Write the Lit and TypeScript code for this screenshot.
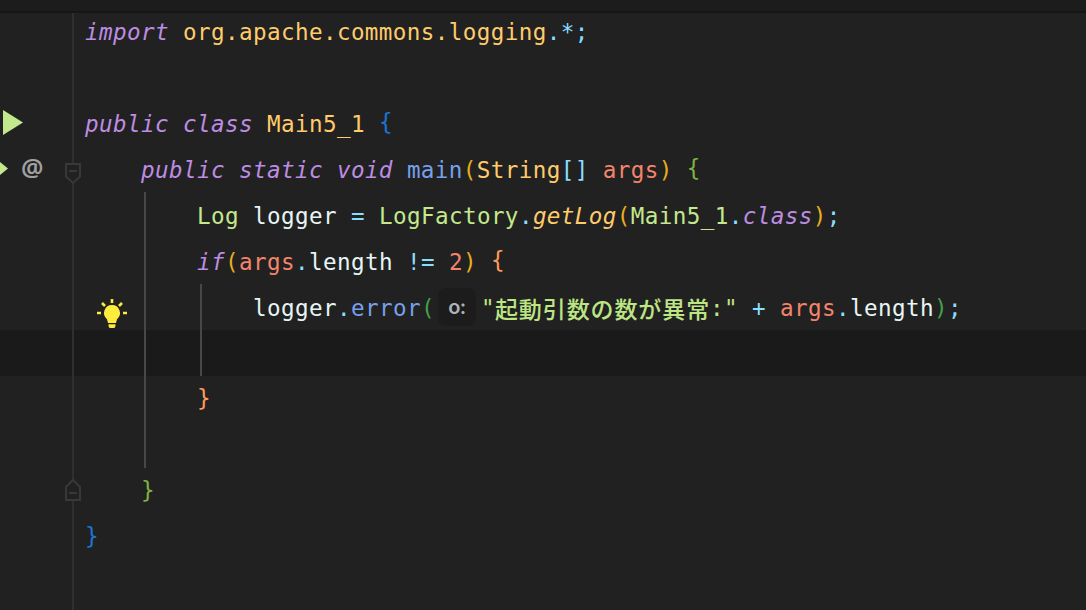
import { LitElement, html, css } from "lit";
import { customElement } from "lit/decorators.js";

type Tok = [string, string];
const B = "blue up", Y = "yel", C = "cy", P = "pur", F = "fn", S = "sal", W = "wh", G = "grn up", L = "lime", O = "org up", Br = "br";

const lines: { indent: number; toks: Tok[]; cur?: boolean; g?: string }[] = [
  { indent: 0, toks: [["import", P], [" ", W], ["org.apache.commons.logging", Y], [".*;", C]] },
  { indent: 0, toks: [] },
  { indent: 0, toks: [["public class", P], [" ", W], ["Main5_1", Y], [" ", W], ["{", B]], g: "run" },
  { indent: 1, toks: [["public static void", P], [" ", W], ["main", F], ["(", Br], ["String", Y], ["[]", C], [" ", W], ["args", S], [")", Br], [" ", W], ["{", G]], g: "method" },
  { indent: 2, toks: [["Log", L], [" logger ", W], ["=", C], [" ", W], ["LogFactory", L], [".", C], ["getLog", "yi"], ["(", Br], ["Main5_1", L], [".", C], ["class", P], [")", Br], [";", C]] },
  { indent: 2, toks: [["if", P], ["(", Br], ["args", S], [".", C], ["length ", W], ["!=", C], [" ", W], ["2", S], [")", Br], [" ", W], ["{", O]] },
  { indent: 3, toks: [], g: "bulb" },
  { indent: 3, toks: [], cur: true },
  { indent: 2, toks: [["}", O]] },
  { indent: 0, toks: [] },
  { indent: 1, toks: [["}", G]], g: "foldEnd" },
  { indent: 0, toks: [["}", B]] },
  { indent: 0, toks: [] },
];

@customElement("app-root")
export class AppRoot extends LitElement {
  static styles = css`
    :host { display: block; width: 1086px; height: 610px; overflow: hidden; background: #212121; position: relative; }
    .top { height: 13px; background: #1c1c1c; border-bottom: 2px solid #161616; box-sizing: border-box; position: relative; z-index: 2; }
    .editor { margin-top: -5px; position: relative; font-family: "DejaVu Sans Mono", monospace; font-size: 22.6px; letter-spacing: 0.39px; font-weight: 400; }
    .line { height: 46px; display: flex; align-items: center; white-space: pre; }
    .line.cur { background: #1a1a1a; }
    .gut { width: 85px; height: 100%; flex: none; position: relative; }
    .in0 { padding-left: 0; } .in1 { padding-left: 56px; } .in2 { padding-left: 112px; } .in3 { padding-left: 168px; }
    .code { display: flex; align-items: center; line-height: 46px; padding-top: 1px; }
    .up { margin-bottom: 3px; }
    .blue { color: #1a76d2; } .yel { color: #ffcb6b; } .cy { color: #89ddff; } .pur { color: #bd8ce3; font-style: italic; }
    .fn { color: #76a0ea; } .sal { color: #f4846a; } .wh { color: #e6f5f5; } .grn { color: #7cb342; } .lime { color: #c3e88d; }
    .dkg { color: #43a047; }
    .org { color: #ff9a5c; } .br { color: #e8ad20; } .yi { color: #ffcb6b; font-style: italic; }
    .str { color: #bde584; }
    .cjk { font-family: "Noto Sans CJK JP", sans-serif; font-size: 23px; font-weight: 500; letter-spacing: 0.9px; line-height: 46px; }
    .hint { width: 38px; height: 38px; margin: -1px 5px 0 3px; border-radius: 8px; background: #1c1c1c; color: #abb2b9; font-family: "Inter", sans-serif; font-size: 20px; font-weight: 600; letter-spacing: -0.5px; display: flex; align-items: center; justify-content: center; }
    .rail { position: absolute; left: 72px; top: 0; width: 2px; background: #2f2f2f; height: 610px; }
    .guide { position: absolute; width: 2px; background: #484848; }
    .g1 { left: 144px; top: 184px; height: 276px; }
    .g2 { left: 200px; top: 276px; height: 92px; }
    svg { position: absolute; display: block; overflow: visible; }
    .at { position: absolute; left: 21px; top: 0; line-height: 42px; color: #a0a0a0; font-family: "Noto Sans", sans-serif; font-weight: 600; font-size: 25px; letter-spacing: 0; }
  `;

  gutter(g?: string) {
    if (g === "run") return html`<svg style="left:3px;top:10px" width="20" height="25" viewBox="0 0 20 25"><path d="M0 0 L20 12.5 L0 25Z" fill="#c3e88d"/></svg>`;
    if (g === "method") return html`
      <svg style="left:0;top:16px" width="8" height="13" viewBox="0 0 8 13"><path d="M0 0 L8 6.5 L0 13Z" fill="#c3e88d"/></svg>
      <span class="at">@</span>
      <svg style="left:65px;top:17px" width="16" height="21" viewBox="0 0 16 21"><path d="M1 1 H15 V13.5 L8 20 L1 13.5Z" fill="#212121" stroke="#383838" stroke-width="2"/><path d="M4 8 H12" stroke="#383838" stroke-width="2"/></svg>`;
    if (g === "foldEnd") return html`
      <svg style="left:65px;top:11px" width="16" height="22" viewBox="0 0 16 22"><path d="M1 21 H15 V8 L8 1 L1 8Z" fill="#212121" stroke="#383838" stroke-width="2"/><path d="M4 14 H12" stroke="#383838" stroke-width="2"/></svg>`;
    if (g === "bulb") return html`
      <svg style="left:97px;top:15px" width="30" height="29" viewBox="0 0 30 29">
        <path d="M15 0 V4 M5 4 L8 7 M25 4 L22 7 M0 14 H4 M26 14 H30" stroke="#ffeb3b" stroke-width="2.6" fill="none"/>
        <path d="M15 6 a8 8 0 0 1 5 14.2 l-1 3.8 h-8 l-1 -3.8 a8 8 0 0 1 5 -14.2Z" fill="#ffeb3b"/>
        <path d="M11.5 25.3 H18.5 V27 L17.5 29 H12.5 L11.5 27Z" fill="#ffeb3b"/>
      </svg>`;
    return "";
  }

  errorLine() {
    return html`<span class="wh">logger</span><span class="cy">.</span><span class="fn">error</span><span class="dkg">(</span><span class="hint">o:</span><span class="str">"</span><span class="str cjk">起動引数の数が異常</span><span class="str">:"</span><span class="wh"> </span><span class="cy">+</span><span class="wh"> </span><span class="sal">args</span><span class="cy">.</span><span class="wh">length</span><span class="dkg">)</span><span class="cy">;</span>`;
  }

  render() {
    return html`
      <div class="top"></div>
      <div class="editor">
        <div class="rail"></div>
        ${lines.map((l) => html`
          <div class="line ${l.cur ? "cur" : ""}">
            <div class="gut">${this.gutter(l.g)}</div>
            <div class="code in${l.indent}">
              ${l.g === "bulb" ? this.errorLine() : l.toks.map(([t, c]) => html`<span class=${c}>${t}</span>`)}
            </div>
          </div>`)}
        <div class="guide g1"></div>
        <div class="guide g2"></div>
      </div>`;
  }
}
